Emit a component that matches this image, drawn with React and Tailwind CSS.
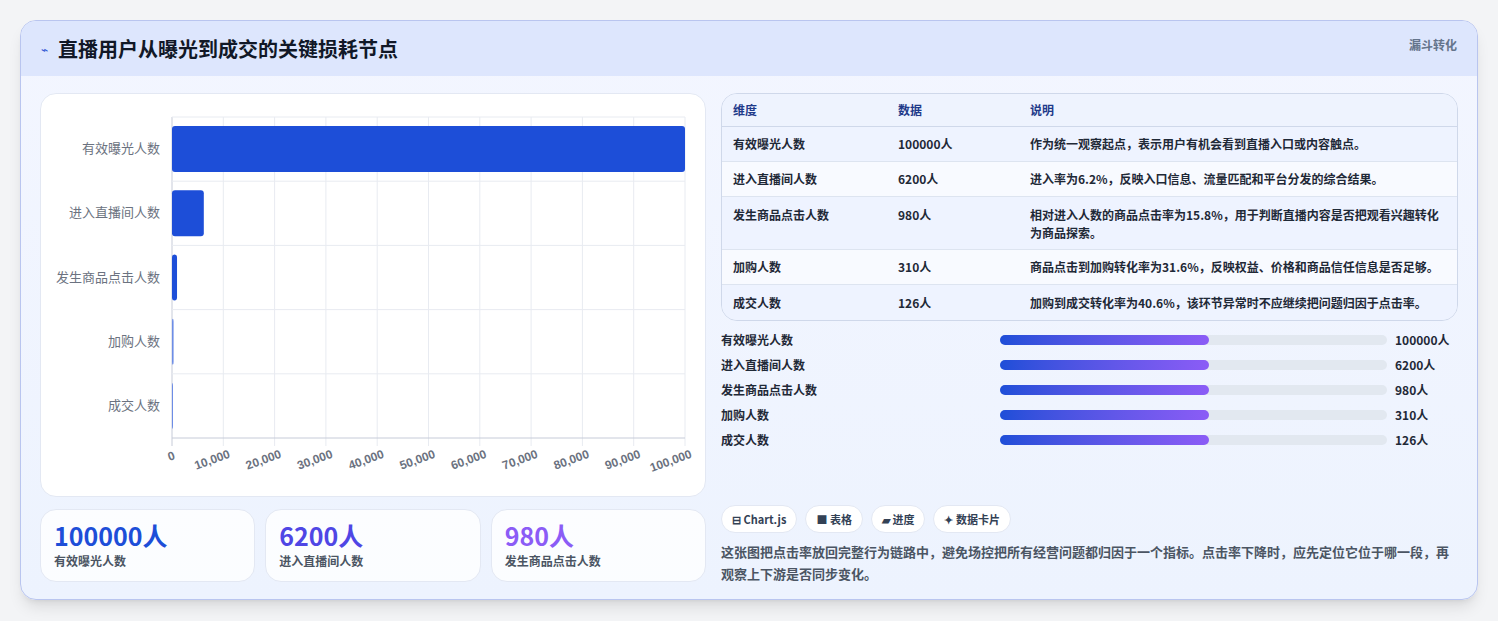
export default function App() {
  const cats = ["有效曝光人数", "进入直播间人数", "发生商品点击人数", "加购人数", "成交人数"];
  const vals = [100000, 6200, 980, 310, 126];
  const L = 131, R = 644, T = 23, B = 344;
  const rowH = (B - T) / 5;
  const ticks = [0, 10000, 20000, 30000, 40000, 50000, 60000, 70000, 80000, 90000, 100000];
  const rows = [
    ["有效曝光人数", "100000人", "作为统一观察起点，表示用户有机会看到直播入口或内容触点。"],
    ["进入直播间人数", "6200人", "进入率为6.2%，反映入口信息、流量匹配和平台分发的综合结果。"],
    ["发生商品点击人数", "980人", "相对进入人数的商品点击率为15.8%，用于判断直播内容是否把观看兴趣转化为商品探索。"],
    ["加购人数", "310人", "商品点击到加购转化率为31.6%，反映权益、价格和商品信任信息是否足够。"],
    ["成交人数", "126人", "加购到成交转化率为40.6%，该环节异常时不应继续把问题归因于点击率。"],
  ];
  const font = { fontFamily: '"Noto Sans CJK SC", "Noto Sans", sans-serif' };
  return (
    <div className="w-[1498px] h-[621px] bg-[#f3f4f6] pt-5 pl-5" style={font}>
      <div className="w-[1458px] h-[580px] rounded-2xl border border-[#b9c5ef] bg-gradient-to-b from-[#f3f6ff] to-[#edf3fe] overflow-hidden shadow-lg">
        <div className="h-[55px] bg-[#dde6fd] flex items-center justify-between px-5">
          <div className="flex items-center gap-[10px]">
            <span className="text-[#2f55d4] text-xs">⌁</span>
            <span className="text-[20px] font-bold text-[#111827]">直播用户从曝光到成交的关键损耗节点</span>
          </div>
          <span className="text-xs font-semibold text-[#64748b] self-start mt-4">漏斗转化</span>
        </div>
        <div className="flex gap-[15px] px-[19px] pt-[17px]">
          <div className="w-[666px] flex flex-col gap-3">
            <div className="h-[404px] bg-white rounded-2xl border border-[#e3e8f3]">
              <svg width="666" height="404">
                {ticks.map((t, i) => {
                  const x = L + (i * (R - L)) / 10;
                  return (
                    <g key={i}>
                      <line x1={x} x2={x} y1={T} y2={B + 8} stroke={i === 0 ? "#c6cbd8" : "#e8ebf1"} />
                      <text x={x} y={B + 22} transform={`rotate(-20 ${x} ${B + 22})`} textAnchor="end" fontSize="12" fontWeight="700" fill="#6b7280" fontFamily="Liberation Sans, sans-serif" dx={i === 0 ? 4 : 8}>{t.toLocaleString("en-US")}</text>
                    </g>
                  );
                })}
                {[0, 1, 2, 3, 4, 5].map((i) => (
                  <line key={i} x1={L} x2={R} y1={T + i * rowH} y2={T + i * rowH} stroke={i === 5 ? "#c6cbd8" : "#e8ebf1"} />
                ))}
                {cats.map((c, i) => {
                  const y = T + i * rowH + rowH / 2;
                  const w = Math.max(1, (vals[i] / 100000) * (R - L));
                  return (
                    <g key={c}>
                      <text x={119} y={y + 4} textAnchor="end" fontSize="13" fill="#6b7280">{c}</text>
                      <rect x={L} y={y - 23} width={w} height={46} rx="3" fill={i < 3 ? "#1d4ed8" : "#6d8de6"} />
                    </g>
                  );
                })}
              </svg>
            </div>
            <div className="grid grid-cols-3 gap-[10px]">
              {[["100000人", "text-[#1d4ed8]", "有效曝光人数"], ["6200人", "text-[#4f46e5]", "进入直播间人数"], ["980人", "text-[#8b5cf6]", "发生商品点击人数"]].map(([v, c, l]) => (
                <div key={l} className="h-[73px] bg-white/80 rounded-2xl border border-[#e3e8f3] px-[13px] pt-[9px]">
                  <div className={`text-[25px] font-bold leading-[32px] ${c}`}>{v}</div>
                  <div className="text-xs font-semibold text-[#4b5563] mt-[2px]">{l}</div>
                </div>
              ))}
            </div>
          </div>
          <div className="w-[738px] flex flex-col">
            <div className="rounded-2xl border border-[#cfd8ea] overflow-hidden text-xs font-semibold text-[#1f2937]">
              <div className="h-[33px] flex items-center bg-[#eef3fe] border-b border-[#cfd8ea] text-[#1e3a8a]">
                <div className="w-[176px] pl-[11px]">维度</div>
                <div className="w-[132px]">数据</div>
                <div className="flex-1">说明</div>
              </div>
              {rows.map((r, i) => (
                <div key={i} className={`flex leading-[18px] ${i === 2 ? "h-[53px] items-start pt-[9px]" : "h-[35px] items-center"} ${i % 2 === 0 ? "bg-[#eef3ff]" : "bg-[#f8faff]"} ${i < 4 ? "border-b border-[#dde4f0]" : ""}`}>
                  <div className="w-[176px] pl-[11px]">{r[0]}</div>
                  <div className="w-[132px]">{r[1]}</div>
                  <div className="flex-1 pr-3">{r[2]}</div>
                </div>
              ))}
            </div>
            <div className="mt-[10px] flex flex-col gap-[7px] text-xs font-semibold text-[#1f2937]">
              {cats.map((c, i) => (
                <div key={c} className="flex items-center h-[18px]">
                  <div className="w-[279px]">{c}</div>
                  <div className="w-[387px] h-[10px] rounded-full bg-[#e2e8f0]">
                    <div className="w-[209px] h-full rounded-full bg-gradient-to-r from-[#1d4ed8] to-[#8b5cf6]" />
                  </div>
                  <div className="ml-[8px]">{vals[i]}人</div>
                </div>
              ))}
            </div>
            <div className="mt-[56px] flex gap-2 text-[11px] font-semibold text-[#334155]">
              {["⊟ Chart.js", "■ 表格", "▰ 进度", "✦ 数据卡片"].map((t) => (
                <div key={t} className="h-[28px] px-[10px] flex items-center bg-white rounded-full border border-[#e3e8f3]">{t}</div>
              ))}
            </div>
            <p className="mt-[8px] text-[13px] leading-[22px] font-semibold text-[#4b5563]">这张图把点击率放回完整行为链路中，避免场控把所有经营问题都归因于一个指标。点击率下降时，应先定位它位于哪一段，再观察上下游是否同步变化。</p>
          </div>
        </div>
      </div>
    </div>
  );
}
